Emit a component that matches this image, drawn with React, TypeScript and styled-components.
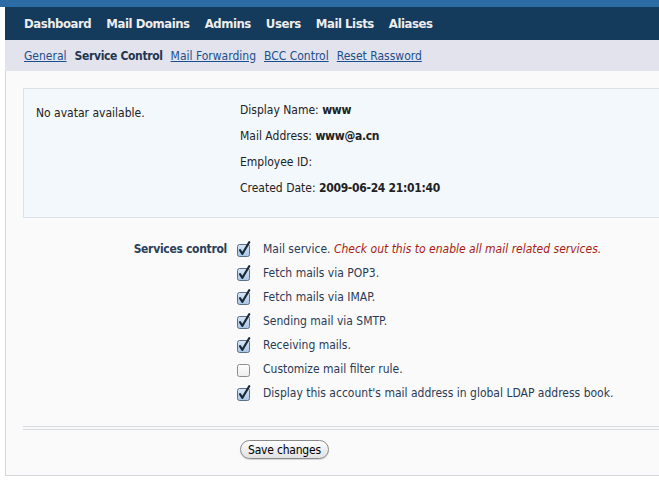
import React from "react";
import styled, { createGlobalStyle } from "styled-components";

const Global = createGlobalStyle`
  html, body { margin: 0; padding: 0; background: #ffffff; }
  body { font-family: "DejaVu Sans Condensed", "DejaVu Sans", sans-serif; font-size: 12px; color: #222; }
`;

const Page = styled.div`
  width: 659px;
  height: 484px;
  overflow: hidden;
  display: flex;
  flex-direction: column;
`;

const TopStrip = styled.div`
  height: 7px;
  background: #2a6ca3;
  flex-shrink: 0;
`;

const Frame = styled.div`
  margin-left: 5px;
  display: flex;
  flex-direction: column;
`;

const MainNav = styled.nav`
  height: 33px;
  background: #143a5c;
  display: flex;
  align-items: center;
  padding-left: 19px;
  gap: 15px;
`;

const NavItem = styled.span`
  color: #ededed;
  font-weight: bold;
  font-size: 13px;
  letter-spacing: -0.45px;
`;

const SubNav = styled.nav`
  height: 31px;
  background: #e2e3ec;
  display: flex;
  align-items: center;
  padding-left: 19px;
  gap: 8px;
`;

const SubLink = styled.span<{ $active?: boolean }>`
  font-size: 12px;
  color: ${(p) => (p.$active ? "#1f3550" : "#1b4f8e")};
  font-weight: ${(p) => (p.$active ? "bold" : "normal")};
  letter-spacing: ${(p) => (p.$active ? "-0.35px" : "0")};
  text-decoration: ${(p) => (p.$active ? "none" : "underline")};
`;

const Content = styled.div`
  background: #fafafa;
  border-left: 1px solid #d4d6dc;
  border-bottom: 1px solid #d4d6dc;
  height: 405px;
  padding: 17px 0 0 17px;
  box-sizing: border-box;
`;

const InfoBox = styled.div`
  background: #f3f8fc;
  border: 1px solid #dde2e8;
  border-right: none;
  height: 130px;
  box-sizing: border-box;
  display: grid;
  grid-template-columns: 204px 1fr;
  padding: 14px 0 0 12px;
`;

const Avatar = styled.div`
  padding-top: 3px;
`;

const InfoList = styled.div`
  display: flex;
  flex-direction: column;
  gap: 11px;
`;

const InfoLine = styled.div`
  line-height: 15px;
`;

const Val = styled.b`
  letter-spacing: -0.3px;
`;

const Services = styled.div`
  display: grid;
  grid-template-columns: 213px 1fr;
  margin-top: 19px;
`;

const Label = styled.div`
  text-align: right;
  font-weight: bold;
  color: #2a3f5a;
  letter-spacing: -0.3px;
  padding-right: 9px;
  line-height: 24px;
`;

const Options = styled.div`
  display: flex;
  flex-direction: column;
`;

const Option = styled.label`
  display: flex;
  align-items: center;
  height: 24px;
  gap: 11px;
  color: #2a3a55;
`;

const Hint = styled.em`
  color: #a81b10;
`;

const Separator = styled.div`
  margin-top: 21px;
  height: 4px;
  border-top: 1px solid #d8dbe0;
  border-bottom: 1px solid #d8dbe0;
  box-sizing: border-box;
`;

const ButtonRow = styled.div`
  padding: 10px 0 0 217px;
`;

const Button = styled.button`
  font-family: "DejaVu Sans Condensed", "DejaVu Sans", sans-serif;
  font-size: 12px;
  letter-spacing: -0.2px;
  color: #000;
  height: 19px;
  padding: 0 7px;
  border-radius: 10px;
  border: 1px solid #8a8a8a;
  background: linear-gradient(#ffffff, #ececec 60%, #e2e2e2);
  box-shadow: 0 1px 1px rgba(0,0,0,0.15);
`;

const CheckIcon = ({ checked }: { checked: boolean }) => (
  <svg width="16" height="17" viewBox="0 0 16 17" style={{ flexShrink: 0 }}>
    <defs>
      <linearGradient id="cbg" x1="0" y1="0" x2="0" y2="1">
        <stop offset="0" stopColor="#d7e6f6" />
        <stop offset="1" stopColor="#a9c6e6" />
      </linearGradient>
      <linearGradient id="ubg" x1="0" y1="0" x2="0" y2="1">
        <stop offset="0" stopColor="#ffffff" />
        <stop offset="1" stopColor="#ececec" />
      </linearGradient>
    </defs>
    <rect
      x="1.5"
      y="3.5"
      width="12"
      height="12"
      rx="2"
      fill={checked ? "url(#cbg)" : "url(#ubg)"}
      stroke={checked ? "#5a6f8a" : "#8d8d8d"}
    />
    {checked && (
      <path
        d="M4 9.2 L6.4 12.8 L13.2 1.2"
        fill="none"
        stroke="#1a2a3c"
        strokeWidth="2.2"
        strokeLinecap="round"
        strokeLinejoin="round"
      />
    )}
  </svg>
);

const options: { text: React.ReactNode; checked: boolean }[] = [
  {
    text: (
      <span>
        Mail service. <Hint>Check out this to enable all mail related services.</Hint>
      </span>
    ),
    checked: true,
  },
  { text: "Fetch mails via POP3.", checked: true },
  { text: "Fetch mails via IMAP.", checked: true },
  { text: "Sending mail via SMTP.", checked: true },
  { text: "Receiving mails.", checked: true },
  { text: "Customize mail filter rule.", checked: false },
  { text: "Display this account's mail address in global LDAP address book.", checked: true },
];

export default function App() {
  return (
    <Page>
      <Global />
      <TopStrip />
      <Frame>
        <MainNav>
          {["Dashboard", "Mail Domains", "Admins", "Users", "Mail Lists", "Aliases"].map((n) => (
            <NavItem key={n}>{n}</NavItem>
          ))}
        </MainNav>
        <SubNav>
          <SubLink>General</SubLink>
          <SubLink $active>Service Control</SubLink>
          <SubLink>Mail Forwarding</SubLink>
          <SubLink>BCC Control</SubLink>
          <SubLink>Reset Rassword</SubLink>
        </SubNav>
        <Content>
          <InfoBox>
            <Avatar>No avatar available.</Avatar>
            <InfoList>
              <InfoLine>
                Display Name: <Val>www</Val>
              </InfoLine>
              <InfoLine>
                Mail Address: <Val>www@a.cn</Val>
              </InfoLine>
              <InfoLine>Employee ID:</InfoLine>
              <InfoLine>
                Created Date: <Val>2009-06-24 21:01:40</Val>
              </InfoLine>
            </InfoList>
          </InfoBox>
          <Services>
            <Label>Services control</Label>
            <Options>
              {options.map((o, i) => (
                <Option key={i}>
                  <CheckIcon checked={o.checked} />
                  {o.text}
                </Option>
              ))}
            </Options>
          </Services>
          <Separator />
          <ButtonRow>
            <Button>Save changes</Button>
          </ButtonRow>
        </Content>
      </Frame>
    </Page>
  );
}
